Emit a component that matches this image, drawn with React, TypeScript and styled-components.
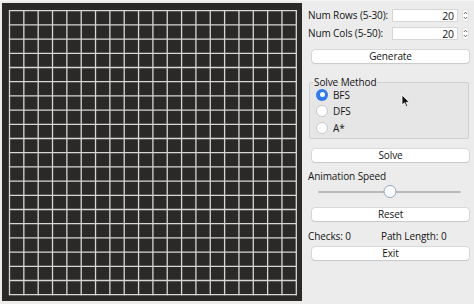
import React from "react";
import styled, { createGlobalStyle } from "styled-components";

const Global = createGlobalStyle`
  html, body { margin: 0; padding: 0; }
  body {
    background: #ececec;
    font-family: "Open Sans", "Noto Sans", sans-serif;
    color: #141414;
    width: 474px;
    height: 304px;
    overflow: hidden;
  }
`;

const Window = styled.div`
  display: flex;
  width: 474px;
  height: 304px;
  background: #ececec;
  border-top: 1px solid #f4f4f4;
  box-sizing: border-box;
`;

const CanvasBox = styled.div`
  margin: 2px 0 0 2px;
  width: 300px;
  height: 298px;
  background: #2b2828;
  flex: none;
`;

const Panel = styled.div`
  flex: 1;
  display: flex;
  flex-direction: column;
  padding: 7px 4px 0 6px;
  font-size: 10px;
  font-weight: 500;
  letter-spacing: -0.1px;
`;

const FieldRow = styled.div`
  display: flex;
  align-items: center;
  height: 14px;
  margin-bottom: 4px;
`;

const Label = styled.span`
  white-space: nowrap;
  width: 84px;
`;

const NumInput = styled.div`
  width: 66px;
  height: 13px;
  background: #fff;
  border: 1px solid #d6d6d6;
  box-sizing: border-box;
  font-size: 10.5px;
  text-align: right;
  line-height: 12px;
  padding-right: 3px;
`;

const Spinner = styled.div`
  margin-left: 3px;
  width: 8px;
  height: 14px;
  display: flex;
  align-items: center;
  justify-content: center;
`;

const Button = styled.div<{ $top?: number }>`
  margin: ${(p) => p.$top ?? 0}px 1px 0 4px;
  height: 13px;
  background: #fff;
  border-radius: 3px;
  box-shadow: 0 0 0 0.5px #c4c4c4, 0 1px 1px rgba(0, 0, 0, 0.12);
  line-height: 13px;
  text-align: center;
`;

const Group = styled.fieldset`
  margin: 14px 1px 0 1px;
  padding: 1px 0 4px 6px;
  border: 1px solid #cfcfcf;
  border-radius: 2px;
  height: 62px;
  box-sizing: border-box;
  background: #e6e6e6;
  display: flex;
  flex-direction: column;
  gap: 3px;
  min-width: 0;
`;

const Legend = styled.legend`
  padding: 0 1px;
  margin-left: -3px;
  line-height: 10px;
`;

const RadioRow = styled.div`
  display: flex;
  align-items: center;
  height: 13.5px;
`;

const Radio = styled.span<{ $on?: boolean }>`
  width: 12px;
  height: 12px;
  border-radius: 50%;
  box-sizing: border-box;
  margin-right: 5px;
  background: ${(p) => (p.$on ? "#2f7bf5" : "#fff")};
  border: ${(p) => (p.$on ? "none" : "1px solid #c9c9c9")};
  display: flex;
  align-items: center;
  justify-content: center;
  &::after {
    content: "";
    display: ${(p) => (p.$on ? "block" : "none")};
    width: 5px;
    height: 5px;
    border-radius: 50%;
    background: #fff;
  }
`;

const TextLine = styled.div<{ $top?: number }>`
  margin-top: ${(p) => p.$top ?? 0}px;
  height: 14px;
  line-height: 14px;
  display: flex;
`;

const Cell = styled.span<{ $w?: number }>`
  width: ${(p) => (p.$w ? `${p.$w}px` : "auto")};
`;

const Slider = styled.div`
  margin: 2px 9px 0 10px;
  height: 14px;
  position: relative;
  display: flex;
  align-items: center;
`;

const Track = styled.div`
  flex: 1;
  height: 2px;
  background: #b9b9b9;
  border-radius: 1px;
`;

const Thumb = styled.div`
  position: absolute;
  top: 0;
  width: 13px;
  height: 13px;
  border-radius: 50%;
  background: #fbfcfe;
  border: 1px solid #8fa6c4;
  box-sizing: border-box;
  transform: translateX(-50%);
`;

const Cursor = styled.svg`
  position: absolute;
  left: 401px;
  top: 94px;
`;

const Maze: React.FC = () => {
  const n = 20;
  const x0 = 7.5, y0 = 7.7, w = 14.34, h = 14.2;
  const lines: React.ReactNode[] = [];
  for (let i = 0; i <= n; i++) {
    lines.push(
      <line key={"v" + i} x1={x0 + i * w} y1={y0 - 0.6} x2={x0 + i * w} y2={y0 + n * h + 0.6} />
    );
    lines.push(
      <line key={"h" + i} x1={x0 - 0.6} y1={y0 + i * h} x2={x0 + n * w + 0.6} y2={y0 + i * h} />
    );
  }
  return (
    <svg width="300" height="298" viewBox="0 0 300 298">
      <g stroke="#d8d6d6" strokeWidth="1.3">{lines}</g>
    </svg>
  );
};

const Chevrons = () => (
  <svg width="7" height="13" viewBox="0 0 7 13">
    <rect x="0.5" y="0.5" width="6" height="12" rx="3" fill="#fff" stroke="#d0d0d0" strokeWidth="0.6" />
    <path d="M1.8 5 L3.5 3.2 L5.2 5 M1.8 8 L3.5 9.8 L5.2 8" fill="none" stroke="#555" strokeWidth="0.9" />
  </svg>
);

export default function App() {
  return (
    <>
      <Global />
      <Window>
        <CanvasBox>
          <Maze />
        </CanvasBox>
        <Panel>
          <FieldRow>
            <Label>Num Rows (5-30):</Label>
            <NumInput>20</NumInput>
            <Spinner><Chevrons /></Spinner>
          </FieldRow>
          <FieldRow>
            <Label>Num Cols (5-50):</Label>
            <NumInput>20</NumInput>
            <Spinner><Chevrons /></Spinner>
          </FieldRow>
          <Button $top={6}>Generate</Button>
          <Group>
            <Legend>Solve Method</Legend>
            <RadioRow><Radio $on />BFS</RadioRow>
            <RadioRow><Radio />DFS</RadioRow>
            <RadioRow><Radio />A*</RadioRow>
          </Group>
          <Button $top={10}>Solve</Button>
          <TextLine $top={7}>Animation Speed</TextLine>
          <Slider>
            <Track />
            <Thumb style={{ left: "50%" }} />
          </Slider>
          <Button $top={9}>Reset</Button>
          <TextLine $top={8}>
            <Cell $w={73}>Checks: 0</Cell>
            <Cell>Path Length: 0</Cell>
          </TextLine>
          <Button $top={4}>Exit</Button>
        </Panel>
      </Window>
      <Cursor width="10" height="14" viewBox="0 0 10 14">
        <path d="M1 1 L1 11 L3.5 8.8 L5.3 12.8 L6.8 12.1 L5.1 8.3 L8.4 8.3 Z" fill="#111" stroke="#fff" strokeWidth="0.8" />
      </Cursor>
    </>
  );
}
